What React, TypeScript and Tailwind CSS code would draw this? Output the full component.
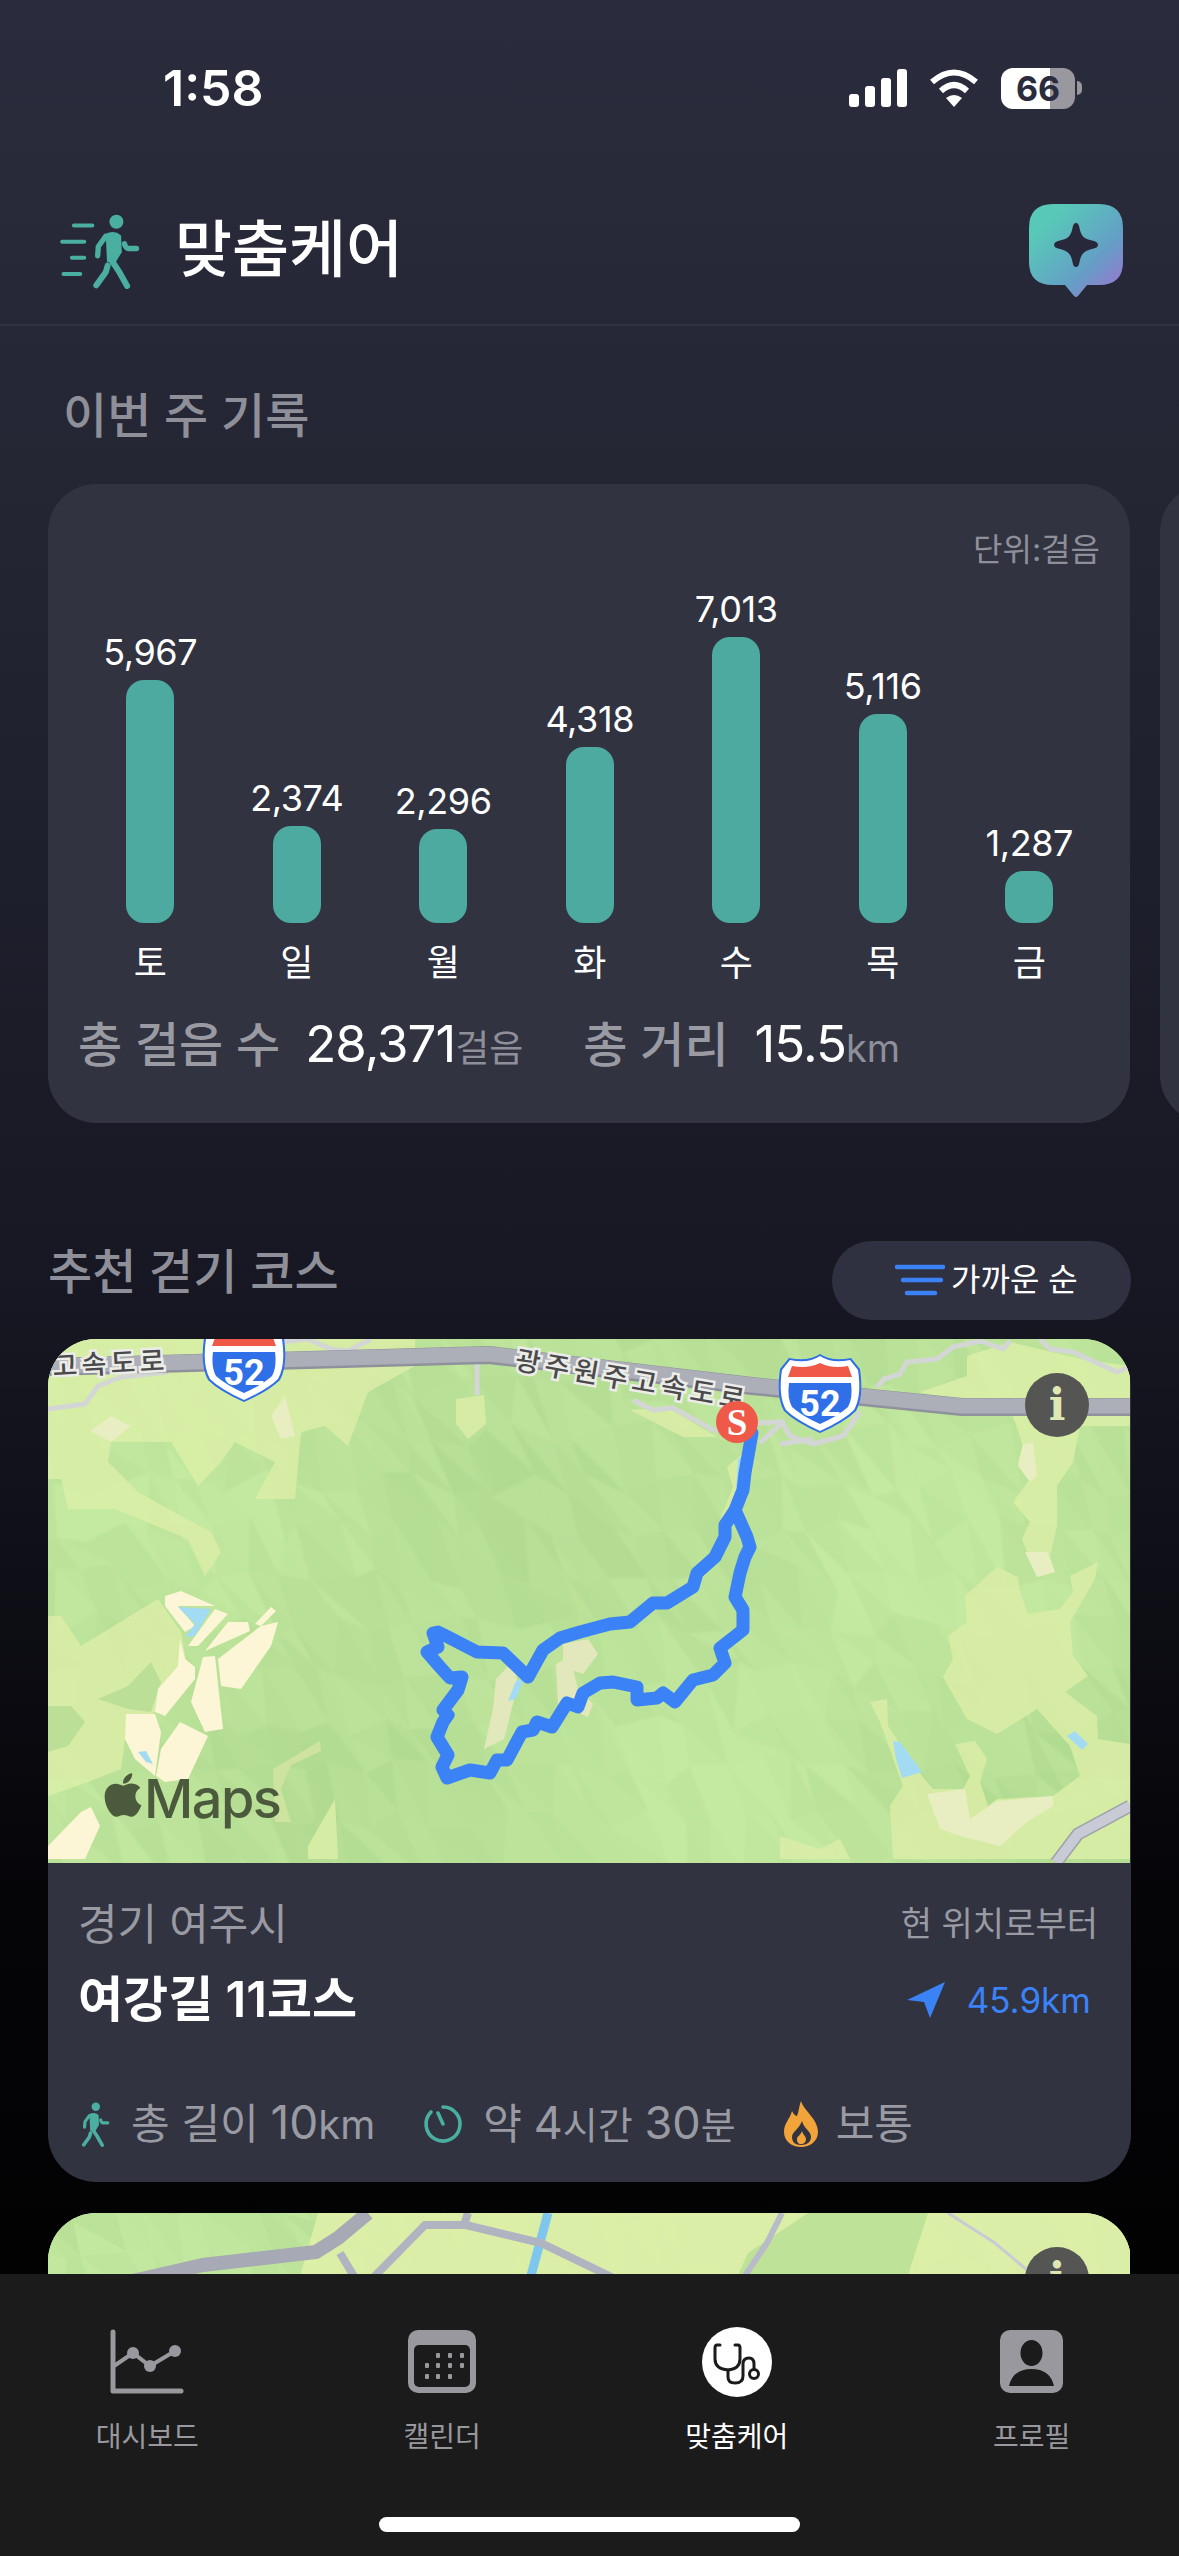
import { FaApple } from "react-icons/fa";

const steps = [
  { day: "토", value: "5,967", height: 243 },
  { day: "일", value: "2,374", height: 97 },
  { day: "월", value: "2,296", height: 94 },
  { day: "화", value: "4,318", height: 176 },
  { day: "수", value: "7,013", height: 286 },
  { day: "목", value: "5,116", height: 209 },
  { day: "금", value: "1,287", height: 52 },
];

// route traced from the reference, in zoomed crop coordinates
const routeRaw = [
  [1055, 100], [1035, 220], [1030, 270], [1005, 330], [975, 375], [975, 410], [945, 470], [890, 520], [880, 560],
  [800, 610], [760, 610], [690, 665], [630, 672], [540, 695], [480, 715], [430, 750], [385, 830], [310, 760],
  [230, 755], [150, 715], [115, 695], [100, 700], [115, 740], [80, 755], [120, 800], [150, 835], [185, 830],
  [175, 870], [130, 930], [145, 945], [130, 965], [110, 1010], [145, 1065], [125, 1100], [140, 1135], [210, 1110],
  [270, 1120], [290, 1080], [320, 1080], [365, 995], [400, 990], [410, 965], [455, 980], [500, 910], [535, 920],
  [550, 880], [600, 850], [640, 845], [710, 860], [710, 900], [770, 895], [790, 880], [825, 905], [880, 840],
  [940, 825], [975, 790], [960, 745], [1030, 690], [1030, 630], [1005, 590], [1020, 520], [1035, 470], [1050, 440],
  [1040, 410], [1005, 330],
];
const route = routeRaw.map(([x, y]) => `${Math.round(352 + x / 3)},${Math.round(61 + y / 3)}`).join(" ");

function rand(a: number, b: number) {
  const s = Math.sin(a * 127.1 + b * 311.7) * 43758.5453;
  return s - Math.floor(s);
}

function mix(a: number[], b: number[], t: number) {
  const c = a.map((v, i) => Math.round(v + (b[i] - v) * t));
  return `rgb(${c[0]},${c[1]},${c[2]})`;
}

// low poly terrain, facets stretched along the ridges
function terrain(w: number, h: number) {
  const sx = 30;
  const sy = 48;
  const pt = (i: number, j: number) => [
    i * sx + j * 12 + (rand(i, j) - 0.5) * 22,
    j * sy + (rand(j + 9, i + 3) - 0.5) * 30,
  ];
  const dark = [177, 218, 145];
  const mid = [196, 233, 160];
  const tris: { p: string; f: string }[] = [];
  for (let i = -12; i < w / sx + 1; i++) {
    for (let j = -1; j < h / sy + 1; j++) {
      const a = pt(i, j), b = pt(i + 1, j), c = pt(i + 1, j + 1), d = pt(i, j + 1);
      [[a, b, c], [a, c, d]].forEach((t, n) => {
        const cx = (t[0][0] + t[1][0] + t[2][0]) / 3;
        const cy = (t[0][1] + t[1][1] + t[2][1]) / 3;
        const broad = 0.55 + 0.22 * Math.sin(cx / 130 + cy / 170) + 0.14 * Math.sin(cy / 60 - cx / 110);
        const l = broad + (rand(i + n * 5, j * 2 + n) - 0.5) * 0.5;
        tris.push({
          p: t.map((q) => `${Math.round(q[0])},${Math.round(q[1])}`).join(" "),
          f: mix(dark, mid, Math.max(0, Math.min(1, l))),
        });
      });
    }
  }
  return tris;
}

const mainTerrain = terrain(1082, 522);
const nextTerrain = terrain(1082, 70);

// zones traced from crops: left crop is 3x local, right crop is 3x with x offset 732
const left = (pts: number[][]) => pts.map(([x, y]) => `${Math.round(x / 3)},${Math.round(y / 3)}`).join(" ");
const right = (pts: number[][]) => pts.map(([x, y]) => `${Math.round(732 + x / 3)},${Math.round(y / 3)}`).join(" ");

const lightZones = [
  left([[0, 0], [1100, 0], [1100, 80], [960, 160], [900, 320], [830, 260], [760, 280], [740, 480], [620, 480], [680, 370], [560, 310], [520, 370], [450, 440], [370, 310], [190, 310], [180, 370], [270, 460], [400, 530], [490, 580], [520, 640], [470, 710], [420, 600], [200, 510], [60, 510], [40, 420], [0, 420]]),
  left([[0, 830], [40, 830], [100, 920], [330, 780], [400, 880], [420, 1000], [340, 1100], [230, 1200], [220, 1290], [120, 1330], [0, 1370]]),
  left([[780, 1520], [860, 1380], [870, 1560], [780, 1560]]),
  right([[420, 160], [560, 110], [560, 50], [690, 10], [900, 60], [1050, 80], [1050, 260], [900, 260], [880, 370], [830, 440], [830, 560], [810, 650], [825, 700], [770, 715], [725, 600], [750, 550], [700, 490], [750, 420], [715, 370], [730, 320], [700, 230]]),
  right([[555, 770], [650, 685], [715, 715], [720, 760], [745, 825], [840, 810], [880, 760], [870, 710], [955, 670], [945, 720], [870, 850], [880, 950], [925, 1010], [855, 1060], [950, 1130], [955, 1200], [1050, 1215], [1050, 1560], [340, 1560], [330, 1400], [370, 1340], [300, 1150], [270, 1090], [320, 1080], [325, 1160], [370, 1230], [425, 1310], [460, 1350], [550, 1350], [570, 1310], [525, 1215], [585, 1205], [620, 1260], [600, 1330], [625, 1400], [650, 1380], [820, 1370], [900, 1310], [870, 1220], [770, 1110], [650, 1185], [560, 1140], [490, 1015], [520, 960], [505, 890], [560, 850]]),
  right([[0, 1490], [120, 1530], [180, 1500], [210, 1560], [0, 1560]]),
  "582,71 619,68 669,98 635,98",
  "679,128 699,111 705,128 699,161 672,181 685,148",
  "408,60 436,56 438,85 420,100 408,85",
];

const darkIslands = [
  left([[0, 1100], [70, 1100], [110, 1150], [60, 1220], [0, 1240]]),
  left([[150, 1080], [240, 1040], [310, 970], [340, 1030], [310, 1120], [240, 1110]]),
];

const paleStrips = [
  left([[350, 770], [400, 755], [500, 800], [390, 800], [440, 860], [410, 880], [350, 800]]),
  left([[500, 810], [540, 825], [450, 920], [420, 920]]),
  left([[540, 850], [600, 850], [605, 875], [470, 935]]),
  left([[620, 855], [670, 805], [685, 815], [640, 860]]),
  left([[640, 860], [690, 850], [670, 920], [580, 1050], [520, 1040], [510, 960]]),
  left([[465, 955], [500, 950], [515, 1090], [525, 1170], [470, 1180], [430, 1090]]),
  left([[395, 900], [410, 960], [440, 985], [440, 1020], [350, 1130], [320, 1120], [330, 1050], [390, 980]]),
  left([[395, 1150], [480, 1190], [420, 1320], [350, 1330], [325, 1310], [340, 1230]]),
  left([[235, 1125], [320, 1125], [340, 1180], [320, 1310], [260, 1260], [230, 1200]]),
  left([[0, 1520], [100, 1420], [130, 1405], [155, 1460], [110, 1560], [0, 1560]]),
];

const greyPatches = [
  left([[125, 275], [190, 230], [250, 260], [190, 310]]),
  left([[670, 230], [710, 170], [740, 290], [700, 300]]),
  right([[730, 315], [760, 310], [770, 410], [750, 430], [715, 380]]),
  right([[735, 640], [800, 640], [825, 700], [770, 715]]),
  right([[440, 1365], [555, 1350], [570, 1440], [650, 1385], [820, 1370], [820, 1400], [740, 1450], [660, 1520], [540, 1490], [480, 1470]]),
];

const water = [
  left([[390, 805], [490, 810], [440, 890], [410, 895], [440, 855]]),
  left([[270, 1240], [295, 1235], [315, 1275], [295, 1270]]),
  right([[340, 1205], [360, 1210], [425, 1300], [365, 1318], [348, 1260]]),
  right([[860, 1190], [885, 1175], [925, 1215], [905, 1232]]),
  "690,120 697,115 694,150 688,150",
  "468,342 476,340 468,360 460,362",
];

function Walker({ lines, className }: { lines?: boolean; className: string }) {
  return (
    <svg viewBox={lines ? "90 95 250 230" : "190 95 150 230"} className={className}>
      <circle cx="264" cy="124" r="21" fill="#4aaea0" />
      <path d="M232 160Q258 148 278 165L280 215L262 245L236 245Z" fill="#4aaea0" />
      <g fill="none" stroke="#4aaea0" strokeLinecap="round" strokeLinejoin="round">
        <path d="M232 168L210 198L208 226" strokeWidth="16" />
        <path d="M288 190Q292 204 300 204L324 204" strokeWidth="16" />
        <path d="M238 255L232 275L204 314" strokeWidth="18" />
        <path d="M250 240L270 270L296 316" strokeWidth="18" />
        {lines && (
          <g strokeWidth="12">
            <path d="M137 135H192" />
            <path d="M102 184H168" />
            <path d="M131 232H168" />
            <path d="M106 280H156" />
          </g>
        )}
      </g>
    </svg>
  );
}

const shieldPath = "M38 0Q50 8 68 4L76 14Q80 40 72 54Q62 64 38 75Q14 64 4 54Q-4 40 0 14L8 4Q26 8 38 0Z";

function Shield({ x, y }: { x: number; y: number }) {
  return (
    <g transform={`translate(${x} ${y})`}>
      <path d="M38 -2Q50 6 69 2L78 13Q82 41 74 55Q63 66 38 77Q13 66 2 55Q-6 41 -2 13L7 2Q26 6 38 -2Z" fill="#2f6fe8" />
      <path d={shieldPath} fill="#fff" />
      <path d="M7 27H69Q71 42 66 51Q56 60 38 68Q20 60 10 51Q5 42 7 27Z" fill="#2f6fe8" />
      <path d="M38 7Q50 13 66 10L70 21H6L10 10Q26 13 38 7Z" fill="#ee5a47" />
      <text x="38" y="60" textAnchor="middle" fontSize="36" fontWeight="700" fill="#fff" fontFamily="Roboto">52</text>
    </g>
  );
}

function MainMap() {
  return (
    <svg viewBox="0 0 1082 524" className="block w-[1082px] h-[524px] bg-[#c0e59b]">
      <defs>
        <filter id="soft">
          <feGaussianBlur stdDeviation="1.2" />
        </filter>
      </defs>
      <g filter="url(#soft)">
        {mainTerrain.map((t, i) => (
          <polygon key={i} points={t.p} fill={t.f} stroke={t.f} strokeWidth="1" />
        ))}
      </g>
      <g fill="#dbeea7" opacity="0.85">
        {lightZones.map((p, i) => <polygon key={i} points={p} />)}
      </g>
      <g fill="#bcdf97">
        {darkIslands.map((p, i) => <polygon key={i} points={p} />)}
      </g>
      <g fill="#e8edc2">
        {greyPatches.map((p, i) => <polygon key={i} points={p} />)}
      </g>
      <g fill="#fcf6d6">
        {paleStrips.map((p, i) => <polygon key={i} points={p} />)}
      </g>
      <g fill="#e2e8bc">
        <path d="M515 305L540 300L550 315L535 335L515 328Z" />
        <path d="M448 340L465 322L470 345L456 400L436 410L445 370Z" />
        <path d="M508 325L522 318L530 350L545 365L540 378L510 365Z" />
      </g>
      <path d="M225 430L272 402L273 412L243 426L233 450L243 483L227 483Z" fill="#cfe3a0" />
      <g fill="#a3dcf2">
        {water.map((p, i) => <polygon key={i} points={p} />)}
      </g>
      {/* roads */}
      <g fill="none" strokeLinejoin="round">
        <path
          d="M0 70L37 65L50 47L73 38L120 33M233 3L260 0L283 10L300 12L323 0M429 24L429 56M585 61L605 71L625 69L669 93M710 84L735 83L712 104M732 105L765 100M829 48L836 40L852 35L859 23L889 20L905 8L932 2L955 10L962 2M992 0L1002 10L1025 13L1069 33L1082 28M732 80L742 97L765 105L795 97L812 73"
          stroke="#d3d6d4"
          strokeWidth="5"
        />
        <path d="M1008 524L1030 495L1082 467" stroke="#9ea0aa" strokeWidth="13" />
        <path d="M1008 524L1030 495L1082 467" stroke="#c8cbd6" strokeWidth="10" />
        <path d="M0 28L441 16L704 47L914 68L1082 68" stroke="#8f919c" strokeWidth="18" />
        <path d="M0 27L441 15L704 46L914 67L1082 67" stroke="#adafb8" strokeWidth="15" />
      </g>
      <g fill="#4a4a4c" stroke="#ecece8" strokeWidth="5" style={{ paintOrder: "stroke" }} fontFamily="'Noto Sans CJK KR'" fontSize="27" fontWeight="500">
        <text x="5" y="37" textLength="112" transform="rotate(-3 5 37)">고속도로</text>
        <text x="466" y="30" textLength="232" transform="rotate(10 466 30)">광주원주고속도로</text>
      </g>
      <Shield x={158} y={-14} />
      <Shield x={734} y={17} />
      <polyline points={route} fill="none" stroke="#3b82f6" strokeWidth="13" strokeLinecap="round" strokeLinejoin="round" />
      <circle cx="689" cy="83" r="21" fill="#ee5a47" />
      <text x="689" y="96" textAnchor="middle" fontSize="37" fontWeight="700" fill="#fff" fontFamily="'Liberation Serif'">S</text>
    </svg>
  );
}

function NextMap() {
  return (
    <svg viewBox="0 0 1082 70" className="block w-[1082px] h-[70px] bg-[#d5eca6]">
      {nextTerrain.map((t, i) => (
        <polygon key={i} points={t.p} fill={t.f} stroke={t.f} strokeWidth="1" />
      ))}
      <path d="M270 0H1082V70H250Z" fill="#deefa9" opacity="0.9" />
      <path d="M700 40L760 0H880L860 62H690Z" fill="#bfe299" />
      <g fill="none">
        <path d="M900 0L947 30L985 62" stroke="#c8cbd4" strokeWidth="3" />
        <path d="M734 0L719 30L692 70" stroke="#b8bbc8" strokeWidth="6" />
        <path d="M500 0L481 70" stroke="#7fc6ef" strokeWidth="9" />
        <path d="M320 70L377 12L418 12L493 30L576 70M420 0L416 12M292 40L310 70" stroke="#b0b3c0" strokeWidth="8" />
        <path d="M76 70L155 52L268 39L290 25L320 0" stroke="#a7a9b4" strokeWidth="14" />
      </g>
    </svg>
  );
}

function InfoBadge() {
  return (
    <div className="absolute right-[42px] top-[34px] w-[64px] h-[64px] rounded-full bg-[#555553] flex items-center justify-center text-[44px] font-bold text-[#dfe8b4] font-['DejaVu_Serif',serif]">
      i
    </div>
  );
}

function CalendarDots() {
  const rows = [
    [28, 40, 52],
    [17, 28, 40, 52],
    [17, 28, 40],
  ];
  const ys = [24, 34, 45];
  return (
    <g fill="#98989e">
      {rows.map((r, i) => r.map((x) => <rect key={`${i}-${x}`} x={x} y={ys[i]} width="4" height="5" rx="1" />))}
    </g>
  );
}

function TabBar() {
  return (
    <div className="absolute left-0 bottom-0 w-full h-[282px] bg-[#1b1b1b]">
      <div className="grid grid-cols-4 pt-[55px]">
        <div className="flex flex-col items-center gap-[24px]">
          <svg width="74" height="66" viewBox="0 0 74 66" fill="none" stroke="#98989e" className="h-[66px]">
            <path d="M3 3V62H71" strokeWidth="5" strokeLinecap="round" strokeLinejoin="round" />
            <path d="M4 37L23 24L40 37L65 22" strokeWidth="4" />
            <g fill="#98989e" stroke="none">
              <circle cx="23" cy="24" r="6" />
              <circle cx="40" cy="37" r="6" />
              <circle cx="65" cy="22" r="6" />
            </g>
          </svg>
          <span className="text-[28px] leading-[36px] text-[#98989e]">대시보드</span>
        </div>
        <div className="flex flex-col items-center gap-[24px]">
          <svg width="68" height="66" viewBox="0 0 68 66" className="h-[66px]">
            <rect y="1" width="68" height="63" rx="10" fill="#98989e" />
            <rect x="6" y="16" width="56" height="42" rx="5" fill="#1b1b1b" />
            <CalendarDots />
          </svg>
          <span className="text-[28px] leading-[36px] text-[#98989e]">캘린더</span>
        </div>
        <div className="flex flex-col items-center gap-[24px]">
          <div className="w-[70px] h-[70px] -my-[2px] rounded-full bg-white">
            <svg viewBox="0 0 70 70" fill="none" stroke="#1b1b1b" strokeWidth="3" strokeLinecap="round" className="w-[70px] h-[70px]">
              <path d="M18 18H15Q13 18 13 21V32Q13 42 26 43Q38 42 38 32V21Q38 18 36 18H33" />
              <path d="M26 43V50Q26 56 33 56Q41 56 41 49V37Q41 31 47 31Q52 31 52 37V42" />
              <circle cx="52" cy="47" r="4.5" />
            </svg>
          </div>
          <span className="text-[28px] leading-[36px] text-white">맞춤케어</span>
        </div>
        <div className="flex flex-col items-center gap-[24px]">
          <svg width="63" height="66" viewBox="0 0 63 66" className="h-[66px]">
            <rect y="1" width="63" height="63" rx="10" fill="#98989e" />
            <ellipse cx="31.5" cy="24" rx="11" ry="13" fill="#1b1b1b" />
            <path d="M9 57Q13 40 31.5 40Q50 40 54 57Z" fill="#1b1b1b" />
          </svg>
          <span className="text-[28px] leading-[36px] text-[#98989e]">프로필</span>
        </div>
      </div>
      <div className="absolute left-[379px] bottom-[24px] w-[421px] h-[15px] rounded-full bg-white" />
    </div>
  );
}

export default function App() {
  return (
    <div className="relative w-[1179px] h-[2556px] overflow-hidden font-['Inter','Noto_Sans_CJK_KR',sans-serif] text-white bg-[linear-gradient(180deg,#2a2b3c_0px,#252634_480px,#191a26_1150px,#161722_1300px,#050508_1900px,#020203_2274px)]">
      {/* status bar */}
      <div className="h-[176px] flex items-center justify-between pl-[163px] pr-[97px]">
        <span className="text-[50px] font-semibold">1:58</span>
        <div className="flex items-center gap-[22px]">
          <svg width="58" height="38" viewBox="0 0 58 38" fill="#fff" className="-ml-[4px]">
            <rect x="0" y="25" width="10" height="13" rx="3" />
            <rect x="16" y="17" width="10" height="21" rx="3" />
            <rect x="32" y="9" width="10" height="29" rx="3" />
            <rect x="48" y="0" width="10" height="38" rx="3" />
          </svg>
          <svg width="50" height="38" viewBox="0 0 50 38" fill="none" stroke="#fff" strokeWidth="6">
            <path d="M3 13Q25 -6 47 13" />
            <path d="M12 22Q25 10 38 22" />
            <path d="M25 38L17 29Q25 23 33 29Z" fill="#fff" stroke="none" />
          </svg>
          <div className="flex items-center gap-[2px]">
            <div className="w-[74px] h-[41px] rounded-[12px] bg-[linear-gradient(90deg,#fff_66%,#98989e_66%)] flex items-center justify-center text-[34px] font-bold text-[#2a2b3c]">
              66
            </div>
            <div className="w-[5px] h-[14px] rounded-r-full bg-[#98989e]" />
          </div>
        </div>
      </div>

      {/* header */}
      <div className="h-[150px] border-b-2 border-[#30313f] flex items-center justify-between pl-[58px] pr-[56px]">
        <div className="flex items-center gap-[33px]">
          <Walker lines className="w-[84px] h-[77px]" />
          <h1 className="text-[62px] leading-[72px] font-medium">맞춤케어</h1>
        </div>
        <svg width="94" height="94" viewBox="0 0 94 94" className="mt-[2px]">
          <defs>
            <linearGradient id="spark" x1="0" y1="0" x2="1" y2="1">
              <stop offset="0.2" stopColor="#58c8b8" />
              <stop offset="0.65" stopColor="#649fc6" />
              <stop offset="1" stopColor="#a36fd2" />
            </linearGradient>
          </defs>
          <path d="M24 0H70Q94 0 94 24V58Q94 81 70 81H58L49 92Q47 94 45 92L36 81H24Q0 81 0 58V24Q0 0 24 0Z" fill="url(#spark)" />
          <path d="M47 19C49 19 50 21 50.5 24C52 32 55 35 63 36.5C67 37 69 39 69 41C69 43 67 44 63 45C55 47 52 50 50.5 58C50 61 49 63 47 63C45 63 44 61 43.5 58C42 50 39 47 31 45C27 44 25 43 25 41C25 39 27 37 31 36.5C39 35 42 32 43.5 24C44 21 45 19 47 19Z" fill="#272839" />
        </svg>
      </div>

      {/* weekly record */}
      <h2 className="mt-[58px] pl-[63px] text-[48px] leading-[64px] font-medium text-[#8e8f99]">이번 주 기록</h2>
      <div className="mt-[36px] pl-[48px] flex gap-[30px]">
        <div className="w-[1082px] h-[639px] shrink-0 rounded-[48px] bg-[#313341] pt-[46px]">
          <div className="pr-[30px] text-right text-[32px] leading-[40px] text-[#8e8f99]">단위:걸음</div>
          <div className="mt-[17px] pl-[29px] grid grid-cols-[repeat(7,146.5px)] items-end">
            {steps.map((s) => (
              <div key={s.day} className="flex flex-col items-center">
                <span className="mb-[6px] text-[36px] leading-[44px] tracking-[-0.4px]">{s.value}</span>
                <div className="w-[48px] rounded-[18px] bg-[#4caaa0]" style={{ height: s.height }} />
                <span className="mt-[18px] text-[36px] leading-[44px]">{s.day}</span>
              </div>
            ))}
          </div>
          <div className="mt-[29px] pl-[30px] flex items-baseline leading-[60px]">
            <span className="text-[48px] font-medium text-[#9a9aa3]">총 걸음 수</span>
            <span className="ml-[25px] text-[51px] tracking-[-1px]">28,371</span>
            <span className="text-[37px] text-[#8e8f99]">걸음</span>
            <span className="ml-[60px] text-[48px] font-medium text-[#9a9aa3]">총 거리</span>
            <span className="ml-[26px] text-[51px] tracking-[-1px]">15.5</span>
            <span className="text-[38px] text-[#8e8f99]">km</span>
          </div>
        </div>
        <div className="w-[1082px] h-[639px] shrink-0 rounded-[48px] bg-[#313341]" />
      </div>

      {/* courses */}
      <div className="mt-[117px] px-[48px] flex items-center justify-between">
        <h2 className="pb-[16px] text-[48px] leading-[64px] font-medium text-[#8e8f99]">추천 걷기 코스</h2>
        <div className="w-[299px] h-[79px] rounded-[40px] bg-[#2f3140] flex items-center pl-[63px] gap-[6px]">
          <svg width="50" height="32" viewBox="0 0 50 32" fill="none" stroke="#3b82f6" strokeWidth="4.5" strokeLinecap="round">
            <path d="M2 3H48M8 16H46M12 29H40" />
          </svg>
          <span className="text-[32px] leading-[40px]">가까운 순</span>
        </div>
      </div>

      <div className="mt-[19px] mx-[48px] rounded-[48px] overflow-hidden bg-[#313341] h-[843px] relative">
        <MainMap />
        <InfoBadge />
        <div className="absolute left-[50px] top-[425px] flex items-center text-[#4b5a3c]">
          <FaApple size={50} className="mt-[-8px]" />
          <span className="ml-[-4px] text-[54px] leading-[70px] font-medium tracking-[-1.5px]">Maps</span>
        </div>
        <div className="px-[30px] pt-[38px]">
          <div className="flex items-center justify-between pr-[3px]">
            <span className="text-[43px] leading-[46px] text-[#9a9aa3]">경기 여주시</span>
            <span className="text-[34px] leading-[40px] text-[#9a9aa3]">현 위치로부터</span>
          </div>
          <div className="mt-[23px] flex items-center justify-between pr-[10px]">
            <span className="text-[49px] leading-[60px] font-semibold">여강길 11코스</span>
            <div className="flex items-center gap-[20px]">
              <svg width="40" height="36" viewBox="0 0 40 36" fill="#3b82f6">
                <path d="M38 0L0 18L17 20L23 36Z" />
              </svg>
              <span className="text-[35px] leading-[44px] text-[#3b82f6]">45.9km</span>
            </div>
          </div>
          <div className="mt-[64px] pl-[3px] flex items-center leading-[56px] text-[#9a9aa3]">
            <Walker className="w-[30px] h-[46px]" />
            <span className="ml-[20px] text-[42px]">총 길이 <span className="text-[46px]">10</span><span className="text-[40px]">km</span></span>
            <svg width="42" height="42" viewBox="0 0 42 42" fill="none" stroke="#4aaea0" strokeWidth="3.6" strokeLinecap="round" className="ml-[48px]">
              <path d="M20 4A17 17 0 1 1 8 9" />
              <path d="M15 10L20 21" />
            </svg>
            <span className="ml-[18px] text-[42px]">약 <span className="text-[45px]">4</span><span className="text-[38px]">시간</span> <span className="text-[45px]">30</span><span className="text-[38px]">분</span></span>
            <svg width="34" height="46" viewBox="0 0 34 46" className="ml-[48px]">
              <path d="M17 0C20 10 34 18 34 31C34 40 26 46 17 46C8 46 0 40 0 31C0 22 6 18 8 10C10 14 12 15 13 15C15 10 15 5 17 0Z" fill="#f2a33a" />
              <path d="M18 20C20 28 27 30 27 36C27 41 23 44 17 44C11 44 8 41 8 36C8 31 15 28 18 20Z" fill="#313341" />
              <path d="M18 30C19 34 22 35 22 38C22 41 20 43 17 43C14 43 13 41 13 38C13 35 17 34 18 30Z" fill="#f2a33a" />
            </svg>
            <span className="ml-[18px] text-[42px]">보통</span>
          </div>
        </div>
      </div>

      <div className="mt-[31px] mx-[48px] rounded-t-[48px] overflow-hidden relative h-[70px]">
        <NextMap />
        <InfoBadge />
      </div>

      <TabBar />
    </div>
  );
}
